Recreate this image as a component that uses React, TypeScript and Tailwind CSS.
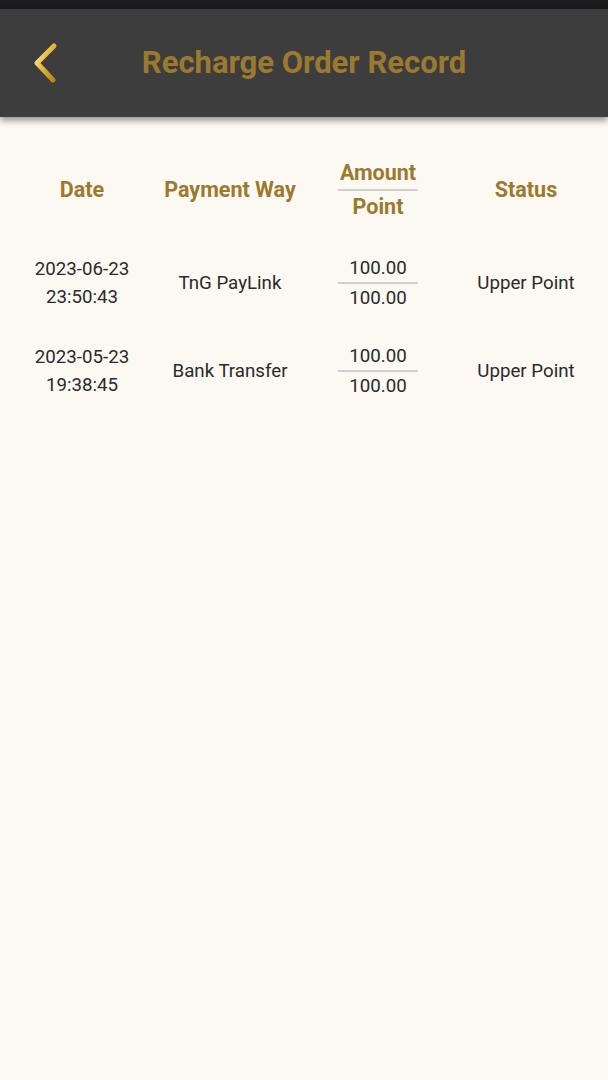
import { ReactNode } from 'react';

const rows = [
  { date: '2023-06-23', time: '23:50:43', way: 'TnG PayLink', amount: '100.00', point: '100.00', status: 'Upper Point' },
  { date: '2023-05-23', time: '19:38:45', way: 'Bank Transfer', amount: '100.00', point: '100.00', status: 'Upper Point' },
];

const Cell = ({ children }: { children: ReactNode }) => (
  <div className="flex flex-col items-center justify-center text-center">{children}</div>
);

export default function App() {
  return (
    <div className="min-h-[1080px] bg-[#fcf9f2] font-['Roboto',sans-serif]">
      <div className="h-[9px] bg-[#1c1c1e]" />
      <header className="relative z-10 flex h-[108px] items-center bg-[#3d3d3d] shadow-[0_3px_7px_rgba(0,0,0,0.45)]">
        <button className="ml-[30px] flex h-[44px] w-[32px] items-center justify-center">
          <svg width="30" height="42" viewBox="0 0 30 42">
            <defs>
              <linearGradient id="gold" x1="0" y1="0" x2="1" y2="1">
                <stop offset="0" stopColor="#fff2a8" />
                <stop offset="0.45" stopColor="#e6b93c" />
                <stop offset="1" stopColor="#b98418" />
              </linearGradient>
            </defs>
            <path d="M23 4 L6 21 L22 38" fill="none" stroke="url(#gold)" strokeWidth="5" strokeLinecap="round" strokeLinejoin="round" />
          </svg>
        </button>
        <h1 className="flex-1 text-center text-[31px] font-bold text-[#9b7a2f]">Recharge Order Record</h1>
        <div className="mr-[30px] w-[32px]" />
      </header>

      <div className="px-[8px] pt-[40px]">
        <div className="grid grid-cols-4 text-[21.5px] font-bold text-[#9b7a2f]">
          <Cell>Date</Cell>
          <Cell>Payment Way</Cell>
          <Cell>
            <span className="leading-[32px]">Amount</span>
            <span className="h-[2px] w-[80px] bg-[#cfcfcf]" />
            <span className="leading-[32px]">Point</span>
          </Cell>
          <Cell>Status</Cell>
        </div>

        <div className="mt-[31px] flex flex-col gap-[30px] text-[18.7px] text-[#2a2a2a]">
          {rows.map((r) => (
            <div key={r.date} className="grid grid-cols-4">
              <Cell>
                <span className="leading-[28px]">{r.date}</span>
                <span className="leading-[28px]">{r.time}</span>
              </Cell>
              <Cell>{r.way}</Cell>
              <Cell>
                <span className="leading-[28px]">{r.amount}</span>
                <span className="h-[2px] w-[80px] bg-[#cfcfcf]" />
                <span className="leading-[28px]">{r.point}</span>
              </Cell>
              <Cell>{r.status}</Cell>
            </div>
          ))}
        </div>
      </div>
    </div>
  );
}
